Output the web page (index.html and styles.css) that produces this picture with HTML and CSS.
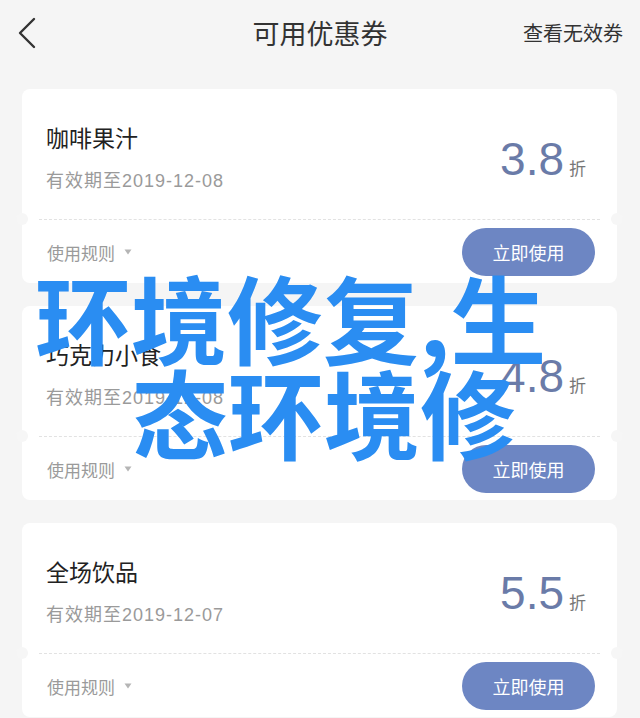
FILE: index.html
```html
<!DOCTYPE html>
<html lang="zh-CN">
<head>
<meta charset="utf-8">
<title>可用优惠券</title>
<link rel="stylesheet" href="styles.css">
</head>
<body>
<div class="page">
  <header class="topbar">
    <div class="back">
      <svg width="20" height="32" viewBox="0 0 20 32"><path d="M17 2 L3 16 L17 30" fill="none" stroke="#333" stroke-width="2.4" stroke-linecap="round" stroke-linejoin="round"/></svg>
    </div>
    <div class="title">可用优惠券</div>
    <div class="invalid">查看无效券</div>
  </header>

  <main class="list">
    <section class="card">
      <div class="card-top">
        <div class="info">
          <div class="name">咖啡果汁</div>
          <div class="date">有效期至2019-12-08</div>
        </div>
        <div class="price"><span class="num">3.8</span><span class="unit">折</span></div>
      </div>
      <div class="divider"></div>
      <div class="card-bottom">
        <div class="rule">使用规则<svg class="caret" width="8" height="6" viewBox="0 0 8 6"><path d="M0.5 0.5 L7.5 0.5 L4 5.5 Z" fill="#b5b5b5"/></svg></div>
        <div class="btn">立即使用</div>
      </div>
    </section>

    <section class="card">
      <div class="card-top">
        <div class="info">
          <div class="name">巧克力小食</div>
          <div class="date">有效期至2019-12-08</div>
        </div>
        <div class="price"><span class="num">4.8</span><span class="unit">折</span></div>
      </div>
      <div class="divider"></div>
      <div class="card-bottom">
        <div class="rule">使用规则<svg class="caret" width="8" height="6" viewBox="0 0 8 6"><path d="M0.5 0.5 L7.5 0.5 L4 5.5 Z" fill="#b5b5b5"/></svg></div>
        <div class="btn">立即使用</div>
      </div>
    </section>

    <section class="card">
      <div class="card-top">
        <div class="info">
          <div class="name">全场饮品</div>
          <div class="date">有效期至2019-12-07</div>
        </div>
        <div class="price"><span class="num">5.5</span><span class="unit">折</span></div>
      </div>
      <div class="divider"></div>
      <div class="card-bottom">
        <div class="rule">使用规则<svg class="caret" width="8" height="6" viewBox="0 0 8 6"><path d="M0.5 0.5 L7.5 0.5 L4 5.5 Z" fill="#b5b5b5"/></svg></div>
        <div class="btn">立即使用</div>
      </div>
    </section>
  </main>

  <div class="watermark">
    <div class="wm-line">环境修复,生</div>
    <div class="wm-line wm-indent">态环境修</div>
  </div>
</div>
</body>
</html>
```

FILE: styles.css
```css
* {
  box-sizing: border-box;
}

html, body {
  margin: 0;
  padding: 0;
}

body {
  background: #f5f5f5;
  font-family: "Liberation Sans", "Noto Sans CJK SC", sans-serif;
  color: #333;
  width: 640px;
  height: 718px;
  overflow: hidden;
}

.page {
  position: relative;
  width: 640px;
  height: 718px;
  overflow: hidden;
}

.topbar {
  display: grid;
  grid-template-columns: 1fr auto 1fr;
  align-items: center;
  height: 66px;
}

.back {
  display: flex;
  align-items: center;
  padding-left: 17px;
}

.back svg {
  display: block;
}

.title {
  font-family: "Noto Sans CJK SC", sans-serif;
  font-size: 27px;
  color: #333;
  line-height: 36px;
}

.invalid {
  justify-self: end;
  padding-right: 17px;
  font-family: "Noto Sans CJK SC", sans-serif;
  font-size: 20px;
  color: #333;
  line-height: 28px;
}

.list {
  display: flex;
  flex-direction: column;
  gap: 23px;
  padding: 23px 23px 0 22px;
}

.card {
  position: relative;
  background: #fff;
  border-radius: 8px;
  height: 194px;
}

.card-top {
  display: flex;
  justify-content: space-between;
  height: 130px;
  padding: 0 31px 0 24px;
}

.name {
  margin-top: 33px;
  font-family: "Noto Sans CJK SC", sans-serif;
  font-size: 23px;
  line-height: 30px;
  color: #222;
}

.date {
  margin-top: 17px;
  font-size: 18px;
  line-height: 24px;
  letter-spacing: 1px;
  color: #9a9a9a;
}

.price {
  padding-top: 47px;
  line-height: 46px;
  color: #6a7ba8;
  white-space: nowrap;
}

.num {
  font-size: 46px;
}

.unit {
  margin-left: 5px;
  font-family: "Noto Sans CJK SC", sans-serif;
  font-size: 17px;
  color: #777;
}

.divider {
  position: relative;
  margin: 0 17px;
  border-top: 1px dashed #e2e2e2;
}

.card::before,
.card::after {
  content: "";
  position: absolute;
  top: 124px;
  width: 12px;
  height: 12px;
  border-radius: 50%;
  background: #f6f6f6;
}

.card::before {
  left: -6px;
}

.card::after {
  right: -6px;
}

.card-bottom {
  display: flex;
  justify-content: space-between;
  align-items: center;
  margin-top: 8px;
  padding: 0 22px 0 25px;
}

.rule {
  display: flex;
  align-items: center;
  font-family: "Noto Sans CJK SC", sans-serif;
  font-size: 17px;
  color: #9a9a9a;
}

.caret {
  display: block;
  margin-left: 9px;
}

.btn {
  width: 133px;
  height: 48px;
  border-radius: 24px;
  background: #6d86c3;
  color: #fff;
  font-family: "Noto Sans CJK SC", sans-serif;
  font-size: 18px;
  display: flex;
  align-items: center;
  justify-content: center;
}

.watermark {
  position: absolute;
  left: 35px;
  top: 268px;
  font-family: "Noto Sans CJK SC", sans-serif;
  font-weight: 700;
  font-size: 96px;
  line-height: 95px;
  color: #2a8df2;
  white-space: nowrap;
  pointer-events: none;
}

.wm-indent {
  padding-left: 97px;
}
```
